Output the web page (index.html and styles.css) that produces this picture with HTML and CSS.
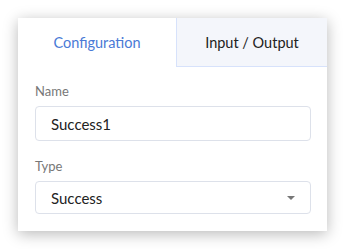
FILE: index.html
```html
<!DOCTYPE html>
<html lang="en">
<head>
    <meta charset="UTF-8">
    <meta name="viewport" content="width=device-width, initial-scale=1.0">
    <title>Block Settings</title>
    <link rel="stylesheet" href="styles.css">
</head>
<body>
    <div class="card">
        <div class="tabs">
            <div class="tab active">Configuration</div>
            <div class="tab">Input / Output</div>
        </div>

        <div class="form">
            <div class="field">
                <label for="name">Name</label>
                <div class="box">Success1</div>
            </div>

            <div class="field">
                <label for="type">Type</label>
                <div class="box select">
                    <span>Success</span>
                    <svg width="10" height="6" viewBox="0 0 10 6"><path d="M1 1h8L5 5z" fill="#777"/></svg>
                </div>
            </div>
        </div>
    </div>
</body>
</html>
```

FILE: styles.css
```css
* {
    box-sizing: border-box;
}
body {
    margin: 0;
    padding: 18px;
    background-color: #fff;
    font-family: Lato, "Open Sans", sans-serif;
}
.card {
    width: 309px;
    height: 213px;
    background-color: #fff;
    box-shadow: 0 3px 14px rgba(0, 0, 0, 0.28);
}
.tabs {
    display: flex;
    height: 49px;
}
.tab {
    display: flex;
    align-items: center;
    justify-content: center;
    font-size: 14.5px;
    color: #222;
}
.tab:first-child {
    width: 158px;
    color: #4a7ad6;
}
.tab:last-child {
    flex: 1;
    background-color: #f4f6fb;
    border-left: 1px solid #d7e2fb;
    border-bottom: 1px solid #d7e2fb;
}
.form {
    padding: 16px 16px 0 17px;
}
.field {
    margin-bottom: 17px;
}
label {
    display: block;
    font-size: 13px;
    line-height: 16px;
    color: #777;
    margin-bottom: 7px;
}
.box {
    height: 35px;
    border: 1px solid #dde1ea;
    border-radius: 4px;
    padding: 0 14px 0 15px;
    display: flex;
    align-items: center;
    font-size: 15px;
    color: #222;
}
.select {
    justify-content: space-between;
    height: 33px;
}
```
